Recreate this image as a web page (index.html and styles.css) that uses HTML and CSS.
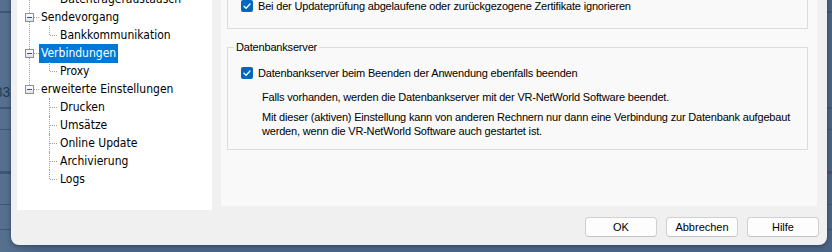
FILE: index.html
```html
<!DOCTYPE html>
<html lang="de">
<head>
  <meta charset="UTF-8">
  <meta name="viewport" content="width=device-width, initial-scale=1">
  <title>Einstellungen</title>
  <link rel="stylesheet" href="styles.css">
</head>
<body>
  <!-- Part of the window behind the dialog -->
  <span class="behind-text">583</span>

  <div class="dialog">
    <div class="dialog-body">

      <!-- Navigation tree on the left -->
      <div class="tree-panel">
        <ul class="tree">
          <li>
            <div class="row"><span class="expander"></span><span class="label">Übertragung</span></div>
            <ul>
              <li class="last"><div class="row"><span class="label">Datenträgeraustausch</span></div></li>
            </ul>
          </li>
          <li>
            <div class="row"><span class="expander"></span><span class="label">Sendevorgang</span></div>
            <ul>
              <li class="last"><div class="row"><span class="label">Bankkommunikation</span></div></li>
            </ul>
          </li>
          <li>
            <div class="row"><span class="expander"></span><span class="label selected">Verbindungen</span></div>
            <ul>
              <li class="last"><div class="row"><span class="label">Proxy</span></div></li>
            </ul>
          </li>
          <li class="last">
            <div class="row"><span class="expander"></span><span class="label">erweiterte Einstellungen</span></div>
            <ul>
              <li><div class="row"><span class="label">Drucken</span></div></li>
              <li><div class="row"><span class="label">Umsätze</span></div></li>
              <li><div class="row"><span class="label">Online Update</span></div></li>
              <li><div class="row"><span class="label">Archivierung</span></div></li>
              <li class="last"><div class="row"><span class="label">Logs</span></div></li>
            </ul>
          </li>
        </ul>
      </div>

      <!-- Settings page on the right -->
      <div class="page">
        <div class="group group-top">
          <label class="check-row">
            <span class="checkbox"><svg viewBox="0 0 12 12" width="12" height="12"><path d="M3 6.2 L5.1 8.2 L9 4" fill="none" stroke="#fff" stroke-width="1.3" stroke-linecap="round" stroke-linejoin="round"/></svg></span>
            Bei der Updateprüfung abgelaufene oder zurückgezogene Zertifikate ignorieren
          </label>
        </div>

        <fieldset class="group">
          <legend>Datenbankserver</legend>
          <label class="check-row">
            <span class="checkbox"><svg viewBox="0 0 12 12" width="12" height="12"><path d="M3 6.2 L5.1 8.2 L9 4" fill="none" stroke="#fff" stroke-width="1.3" stroke-linecap="round" stroke-linejoin="round"/></svg></span>
            Datenbankserver beim Beenden der Anwendung ebenfalls beenden
          </label>
          <p class="hint">Falls vorhanden, werden die Datenbankserver mit der VR-NetWorld Software beendet.</p>
          <p class="hint">Mit dieser (aktiven) Einstellung kann von anderen Rechnern nur dann eine Verbindung zur Datenbank aufgebaut werden, wenn die VR-NetWorld Software auch gestartet ist.</p>
        </fieldset>
      </div>
    </div>

    <!-- Dialog buttons -->
    <div class="buttons">
      <button type="button">OK</button>
      <button type="button">Abbrechen</button>
      <button type="button">Hilfe</button>
    </div>
  </div>
</body>
</html>
```

FILE: styles.css
```css
/* Desktop behind the dialog */
body {
  margin: 0;
  height: 252px;
  overflow: hidden;
  font-family: "Liberation Sans", Arial, sans-serif;
  font-size: 11px;
  color: #000;
  background:
    linear-gradient(#3f5576, #3f5576) 0 11px / 100% 2px no-repeat,
    linear-gradient(#3f5576, #3f5576) 0 107px / 100% 2px no-repeat,
    linear-gradient(#3f5576, #3f5576) 0 129px / 100% 1px no-repeat,
    linear-gradient(#3f5576, #3f5576) 0 171px / 100% 3px no-repeat,
    linear-gradient(#3f5576, #3f5576) 0 204px / 100% 1px no-repeat,
    linear-gradient(#3f5576, #3f5576) 0 229px / 100% 1px no-repeat,
    linear-gradient(90deg, #56708f, #4a6385 40px);
  position: relative;
}
/* Text of the window behind, cut off at the dialog edge */
.behind-text {
  position: absolute;
  left: -13px;
  top: 84px;
  font-size: 14px;
  color: #223a5a;
}
/* Dialog window */
.dialog {
  position: relative;
  margin: -40px 0 0 11px;
  width: 816px;
  height: 285px;
  box-sizing: border-box;
  background: #f0f0f0;
  border-radius: 0 0 8px 8px;
  box-shadow: 0 1px 4px rgba(0, 0, 0, 0.35);
  display: flex;
  flex-direction: column;
}
.dialog-body {
  display: flex;
  align-items: flex-start;
  gap: 9px;
  padding-left: 6px;
}
/* Tree panel */
.tree-panel {
  width: 195px;
  height: 250px;
  background: #fff;
  padding-top: 12px;
  box-sizing: border-box;
  font-family: "DejaVu Sans Condensed", "DejaVu Sans", sans-serif;
  font-stretch: condensed;
  font-size: 12px;
}
.tree, .tree ul {
  list-style: none;
  margin: 0;
  padding: 0;
}
.tree li {
  position: relative;
}
.row {
  height: 18px;
  display: flex;
  align-items: center;
}
.tree > li > .row {
  padding-left: 22px;
}
.tree ul .row {
  padding-left: 41px;
}
.label {
  padding: 0 2px;
  line-height: 19px;
  white-space: nowrap;
}
.label.selected {
  background: #0078d7;
  color: #fff;
}
/* Dotted connector lines */
.tree > li::before {
  content: "";
  position: absolute;
  left: 12px;
  top: 9px;
  bottom: -9px;
  border-left: 1px dotted #a0a0a0;
}
.tree > li.last::before {
  display: none;
}
.tree > li::after {
  content: "";
  position: absolute;
  left: 17px;
  top: 9px;
  width: 5px;
  border-top: 1px dotted #a0a0a0;
}
.tree ul li::before {
  content: "";
  position: absolute;
  left: 32px;
  top: 0;
  height: 18px;
  border-left: 1px dotted #a0a0a0;
}
.tree ul li.last::before {
  height: 9px;
}
.tree ul li::after {
  content: "";
  position: absolute;
  left: 33px;
  top: 9px;
  width: 7px;
  border-top: 1px dotted #a0a0a0;
}
/* Expand/collapse box */
.expander {
  position: absolute;
  left: 8px;
  top: 5px;
  width: 9px;
  height: 9px;
  box-sizing: border-box;
  border: 1px solid #8f8f8f;
  background: linear-gradient(#ffffff, #e2e2e2);
  z-index: 1;
}
.expander::before {
  content: "";
  position: absolute;
  left: 1px;
  top: 3px;
  width: 5px;
  height: 1px;
  background: #2a55b0;
}
/* Right settings page */
.page {
  width: 596px;
  height: 246px;
  background: #f9f9f9;
  padding: 6px 9px 0 6px;
  box-sizing: border-box;
  letter-spacing: -0.18px;
}
.group {
  border: 1px solid #dcdcdc;
  margin: 0;
  padding: 0 6px 11px 13px;
  min-width: 0;
}
.group-top {
  padding-top: 31px;
  padding-bottom: 14px;
}
fieldset.group {
  margin-top: 11px;
}
legend {
  margin-left: -7px;
  padding: 0 2px;
  line-height: 14px;
  margin-bottom: 11px;
}
.check-row {
  display: flex;
  align-items: center;
  gap: 5px;
  height: 16px;
}
.checkbox {
  width: 12px;
  height: 12px;
  border-radius: 2px;
  background: #0067c0;
  display: flex;
}
.hint {
  margin: 9px 0 0 21px;
  line-height: 14px;
}
.hint + .hint {
  margin-top: 6px;
}
/* Bottom button row */
.buttons {
  display: flex;
  justify-content: flex-end;
  gap: 9px;
  margin-top: 7px;
  padding-right: 8px;
}
button {
  width: 72px;
  height: 20px;
  font-family: "Liberation Sans", Arial, sans-serif;
  font-size: 11px;
  color: #000;
  background: #fdfdfd;
  border: 1px solid #d0d0d0;
  border-bottom-color: #c2c2c2;
  border-radius: 4px;
  padding: 0;
}
```
